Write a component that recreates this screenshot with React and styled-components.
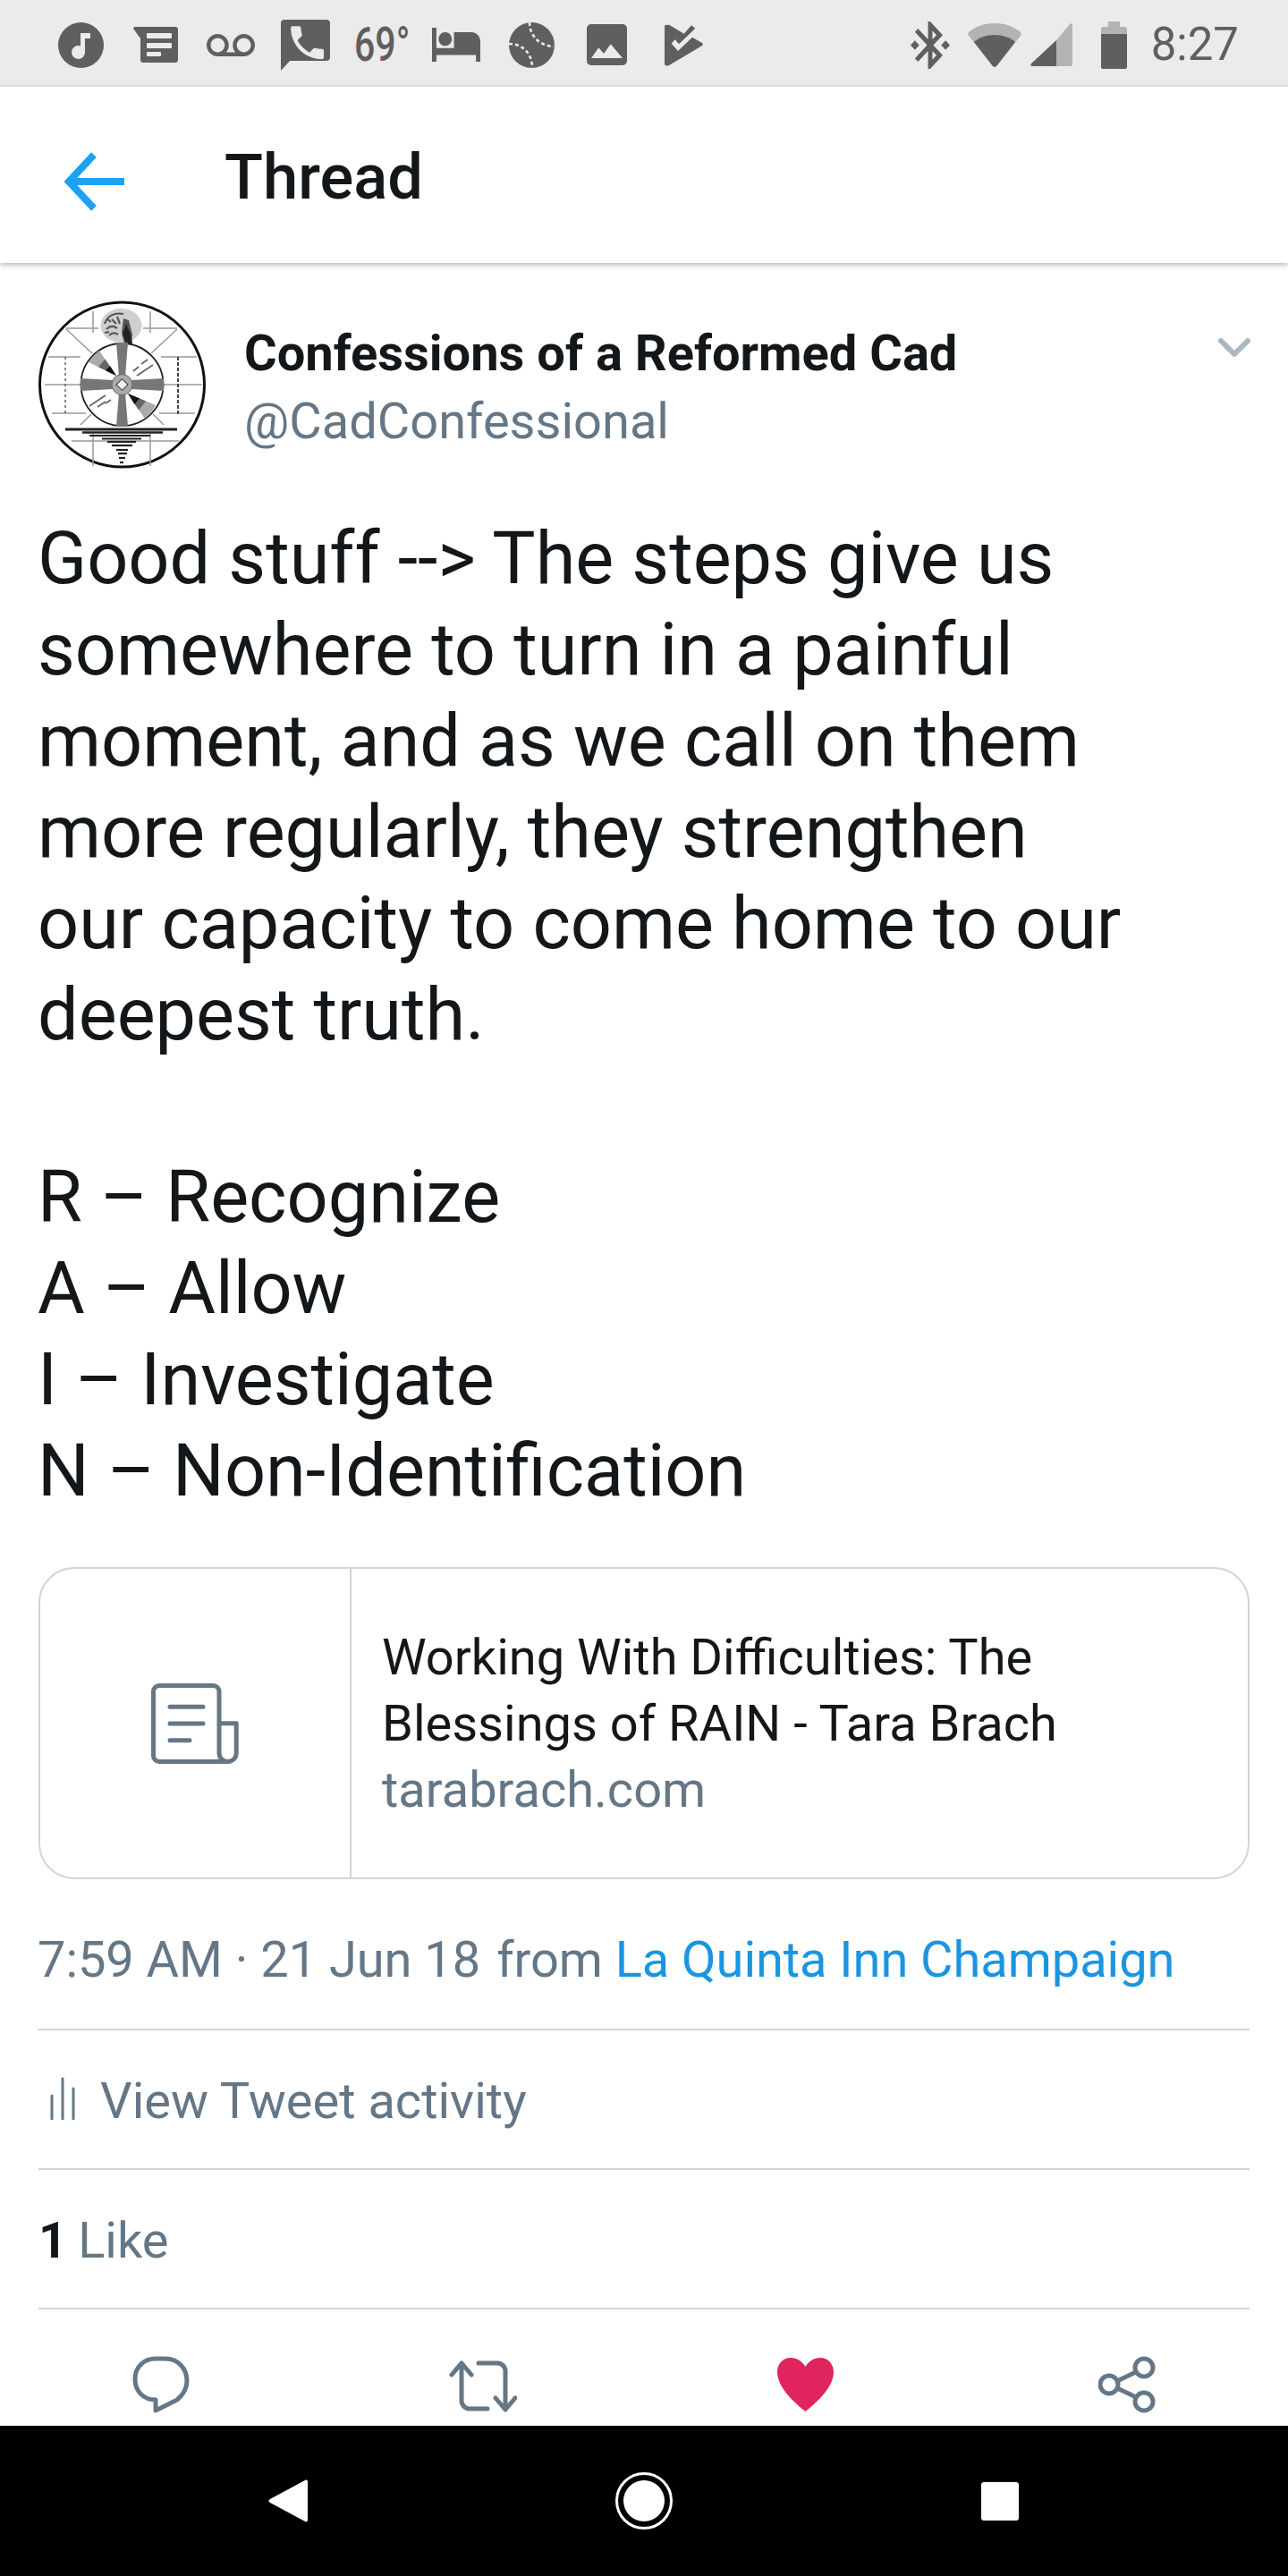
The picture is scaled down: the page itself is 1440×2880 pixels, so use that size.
import React from 'react'
import styled, { createGlobalStyle } from 'styled-components'

const GlobalStyle = createGlobalStyle`
  html, body {
    margin: 0;
    padding: 0;
    background: #fff;
  }
  body {
    font-family: Roboto, "Liberation Sans", sans-serif;
    color: #14171a;
  }
`

const Page = styled.div`
  width: 1440px;
  height: 2880px;
  display: flex;
  flex-direction: column;
  overflow: hidden;
  background: #fff;
`

const StatusBar = styled.div`
  height: 97px;
  box-sizing: border-box;
  flex: none;
  display: flex;
  align-items: center;
  justify-content: space-between;
  padding: 3px 55px 0 65px;
  background: #ebebeb;
  color: #5f5f5f;
`

const StatusGroup = styled.div`
  display: flex;
  align-items: center;
`

const StatusIcon = styled.svg`
  display: block;
  flex: none;
  margin-left: ${(p) => p.$gap || 0}px;
`

const Temp = styled.span`
  flex: none;
  width: 58px;
  margin-left: 27px;
  padding-right: 1px;
  font-size: 54px;
  line-height: 60px;
  font-weight: 500;
  white-space: nowrap;
  transform: scaleX(0.76);
  transform-origin: left center;
`

const Clock = styled.span`
  margin-left: 27px;
  font-size: 51px;
  line-height: 60px;
`

const Header = styled.header`
  height: 197px;
  flex: none;
  position: relative;
  display: flex;
  align-items: center;
  padding-left: 71px;
  background: #fff;
  box-shadow: 0 2px 6px rgba(0, 0, 0, 0.3);
`

const BackArrowIcon = styled.svg`
  display: block;
  margin-top: 15px;
`

const HeaderTitle = styled.h1`
  margin: 5px 0 0 112px;
  font-size: 70.500px;
  line-height: 80px;
  font-weight: 500;
  color: #14171a;
`

const Content = styled.main`
  flex: none;
  padding: 42px 43px 0;
`

const TweetHead = styled.div`
  display: flex;
  align-items: flex-start;
`

const Avatar = styled.svg`
  display: block;
  flex: none;
  width: 188px;
  height: 188px;
`

const Names = styled.div`
  margin-left: 42px;
  padding-top: 21px;
  flex: 1;
`

const Name = styled.div`
  font-size: 56px;
  line-height: 76px;
  font-weight: 700;
`

const Handle = styled.div`
  font-size: 56px;
  line-height: 76px;
  color: #657786;
`

const Chevron = styled.svg`
  display: block;
  flex: none;
  margin: 42px -1px 0 0;
`

const TweetText = styled.p`
  margin: 50px 0 56px -1px;
  font-size: 81px;
  line-height: 102px;
  white-space: pre-line;
`

const LinkCard = styled.div`
  height: 349px;
  box-sizing: border-box;
  display: flex;
  border: 2px solid #ccd6dd;
  border-radius: 40px;
`

const CardThumb = styled.div`
  width: 346px;
  flex: none;
  display: flex;
  align-items: center;
  justify-content: center;
  border-right: 2px solid #ccd6dd;
`

const CardBody = styled.div`
  display: flex;
  flex-direction: column;
  justify-content: center;
  padding-left: 34px;
  font-size: 56px;
  line-height: 74px;
`

const CardDomain = styled.div`
  color: #657786;
`

const Row = styled.div`
  height: 156px;
  box-sizing: border-box;
  display: flex;
  align-items: center;
  padding-top: 4px;
  font-size: 56px;
  color: #657786;
  border-bottom: 2px solid #ccd6dd;
`

const TimeRow = styled(Row)`
  height: 169px;
  padding-top: 12px;
  margin-left: -1px;
  letter-spacing: -0.05px;
`

const From = styled.span`
  margin-left: 18px;
  white-space: pre;
`

const Place = styled.span`
  color: #1b95e0;
`

const ActivityIcon = styled.svg`
  display: block;
  margin: -6px 27px 0 12px;
`

const LikeCount = styled.b`
  color: #14171a;
  font-weight: 700;
  margin-right: 12px;
`

const Actions = styled.div`
  flex: 1;
  display: grid;
  grid-template-columns: repeat(4, 1fr);
  justify-items: center;
  align-items: start;
  padding-top: 52px;
  background: #fff;
`

const ActionIcon = styled.svg`
  display: block;
  margin-top: ${(p) => p.$top || 0}px;
`

const NavBar = styled.nav`
  height: 168px;
  flex: none;
  display: grid;
  grid-template-columns: repeat(3, 398px);
  justify-content: center;
  justify-items: center;
  align-items: center;
  background: #000;
`

const NavIcon = styled.svg`
  display: block;
`

const DocSvg = styled.svg`
  display: block;
`

const MusicIcon = () => (
  <StatusIcon width="51" height="51" viewBox="0 0 51 51">
    <circle cx="25.500" cy="25.500" r="25.500" fill="currentColor" />
    <path d="M25 12h11v6h-6v15a7.500 7.500 0 1 1-5-6.600z" fill="#ebebeb" />
  </StatusIcon>
)

const MessageIcon = () => (
  <StatusIcon $gap={33} width="50" height="40" viewBox="0 0 50 40">
    <path
      fillRule="evenodd"
      fill="currentColor"
      d="M1 0h46a3 3 0 0 1 3 3v34a3 3 0 0 1-3 3H11a3 3 0 0 1-3-3V13L0 2zM16 7a1 1 0 0 0-1 1v4a1 1 0 0 0 1 1h26a1 1 0 0 0 1-1V8a1 1 0 0 0-1-1zM16 18a1 1 0 0 0-1 1v4a1 1 0 0 0 1 1h26a1 1 0 0 0 1-1v-4a1 1 0 0 0-1-1zM16 28a1 1 0 0 0-1 1v3a1 1 0 0 0 1 1h14a1 1 0 0 0 1-1v-3a1 1 0 0 0-1-1z"
    />
  </StatusIcon>
)

const VoicemailIcon = () => (
  <StatusIcon $gap={32} width="54" height="25" viewBox="0 6 24 11" preserveAspectRatio="none">
    <path
      fill="currentColor"
      d="M18.500 6C15.460 6 13 8.460 13 11.500c0 1.330.47 2.550 1.260 3.500H9.740c.79-.95 1.260-2.170 1.260-3.500C11 8.460 8.540 6 5.500 6S0 8.460 0 11.500 2.460 17 5.500 17h13c3.040 0 5.500-2.460 5.500-5.500S21.540 6 18.500 6zm-13 9C3.570 15 2 13.430 2 11.500S3.570 8 5.500 8 9 9.570 9 11.500 7.430 15 5.500 15zm13 0c-1.930 0-3.500-1.570-3.500-3.500S16.570 8 18.500 8 22 9.570 22 11.500 20.430 15 18.500 15z"
    />
  </StatusIcon>
)

const PhoneBubbleIcon = () => (
  <StatusIcon $gap={29} width="55" height="57" viewBox="0 0 55 57">
    <path
      fill="currentColor"
      d="M4 0h47a4 4 0 0 1 4 4v38a4 4 0 0 1-4 4H10L0 57V4a4 4 0 0 1 4-4z"
    />
    <path
      fill="#ebebeb"
      transform="translate(5 1) scale(2.050)"
      d="M6.620 10.790c1.440 2.830 3.760 5.140 6.590 6.590l2.200-2.200c.27-.27.67-.36 1.020-.24 1.120.37 2.330.57 3.570.57.55 0 1 .45 1 1V20c0 .55-.45 1-1 1-9.390 0-17-7.610-17-17 0-.55.45-1 1-1h3.500c.55 0 1 .45 1 1 0 1.250.2 2.450.57 3.570.11.35.03.74-.25 1.020l-2.200 2.200z"
    />
  </StatusIcon>
)

const BedIcon = () => (
  <StatusIcon $gap={28} width="54" height="38" viewBox="1 5 22 15" preserveAspectRatio="none">
    <path
      fill="currentColor"
      d="M7 13c1.660 0 3-1.340 3-3S8.660 7 7 7s-3 1.340-3 3 1.340 3 3 3zm12-6h-8v7H3V5H1v15h2v-3h18v3h2v-9c0-2.210-1.790-4-4-4z"
    />
  </StatusIcon>
)

const BallIcon = () => (
  <StatusIcon $gap={32} width="51" height="51" viewBox="0 0 51 51">
    <circle cx="25.500" cy="25.500" r="25.500" fill="currentColor" />
    <path
      d="M23 0c0 14 10 26 27 27M0 24c15 0 26 10 26 27"
      fill="none"
      stroke="#ebebeb"
      strokeWidth="2.600"
      strokeDasharray="4 3"
    />
  </StatusIcon>
)

const ImageIcon = () => (
  <StatusIcon $gap={36} width="45" height="46" viewBox="0 0 45 46">
    <rect width="45" height="46" rx="5" fill="currentColor" />
    <path d="M5 38 13.300 26.300 19 33 26.700 22.300 40 38z" fill="#ebebeb" />
  </StatusIcon>
)

const CheckIcon = () => (
  <StatusIcon $gap={42} width="43" height="47" viewBox="0 0 43 47">
    <path
      fill="currentColor"
      d="M1 1 5 .7 21.700 10.700 30 1.300 34.300 4.700 16 22.300 11.700 17 7.700 21.700 15 30 31 14.700 42 21c1 1 1 2 0 3L5 46c-2 1-5 1-5-2V3c0-1 0-2 1-2z"
    />
  </StatusIcon>
)

const BluetoothIcon = () => (
  <StatusIcon width="44" height="53" viewBox="3 2 18 20" preserveAspectRatio="none">
    <path
      fill="currentColor"
      d="M7 12l-2-2-2 2 2 2 2-2zm10.710-4.290L12 2h-1v7.590L6.410 5 5 6.410 10.590 12 5 17.590 6.410 19 11 14.410V22h1l5.710-5.710-4.300-4.290 4.300-4.290zM13 5.830l1.880 1.880L13 9.590V5.830zm1.880 10.460L13 18.170v-3.760l1.880 1.880zM19 10l-2 2 2 2 2-2-2-2z"
    />
  </StatusIcon>
)

const WifiIcon = () => (
  <StatusIcon $gap={20} width="60" height="49" viewBox="0 0 60 49">
    <path
      fill="#b3b3b3"
      d="M1 10C8 4 18 0 30 0s22 4 29 10c1 1 1 3 0 4L32 48c-1 1-3 1-4 0L1 14c-1-1-1-3 0-4z"
    />
    <path fill="currentColor" d="M7 21c5-5 14-8 23-8s18 3 23 8L32 48c-1 1-3 1-4 0z" />
  </StatusIcon>
)

const CellIcon = () => (
  <StatusIcon $gap={10} width="47" height="48" viewBox="0 0 47 48">
    <path fill="#b3b3b3" d="M44 1c1-1 3-1 3 1v44c0 1-1 2-2 2H29V19z" />
    <path fill="currentColor" d="M29 19v29H2c-2 0-2-2-1-3z" />
  </StatusIcon>
)

const BatteryIcon = () => (
  <StatusIcon $gap={32} width="29" height="53" viewBox="0 0 29 53">
    <path fill="#b3b3b3" d="M8 0h13v6h6c1 0 2 1 2 2v7H0V8c0-1 1-2 2-2h6z" />
    <path fill="currentColor" d="M0 14h29v37c0 1-1 2-2 2H2c-1 0-2-1-2-2z" />
  </StatusIcon>
)

const BackArrow = () => (
  <BackArrowIcon width="68" height="66" viewBox="0 0 68 66">
    <path d="M34 3 6 33l28 30M6 33h62" fill="none" stroke="#1da1f2" strokeWidth="8" />
  </BackArrowIcon>
)

const baseLines = [
  [53, 178, 160, 2.800],
  [72, 162, 163.500, 2.400],
  [80, 148, 167, 2.200],
  [94, 138, 170.500, 2.200],
  [100, 132, 174, 2.200],
  [105, 128, 178, 2.200],
  [110, 123, 183, 2.200],
  [112, 122, 187, 2.200],
  [113, 120, 192, 2.200],
  [114, 118, 197, 2.200],
]

const TestCard = () => (
  <Avatar viewBox="23 16 188 188">
    <circle cx="116.500" cy="110" r="92" fill="#fff" stroke="#111" strokeWidth="3" />
    <g stroke="#999" strokeWidth="1.500" fill="none">
      <path d="M84 28v24M148 28v24M84 165v36M148 165v36" />
      <path d="M54 48l29 27M178 48l-29 27M70 155l12-12M163 155l-12-12" />
      <path d="M34 79h36M160 79h40M30 110h42M160 110h46M38 142h38M158 142h40" />
      <path d="M60 173h120" />
      <path d="M140 47h38M54 47h36" />
      <path d="M53 79v64" strokeDasharray="3 3" stroke="#666" />
      <path d="M179 79v64" strokeDasharray="4 2" stroke="#444" strokeWidth="2" />
    </g>
    <ellipse cx="115.500" cy="44" rx="23" ry="19" fill="#cfcfcf" />
    <path
      d="M97 42c3-9 11-13 21-11M99 48c4-4 8-4 12-1M102 55c3-3 7-3 10-1M105 37l5 5M111 34l3 8M99 36l5 4M97 52l5-1"
      fill="none"
      stroke="#555"
      strokeWidth="2.200"
    />
    <path d="M118 36l6 2 4 16-2 10h-7l-3-12z" fill="#555" />
    <path d="M121 42l6 14 1 8-7 0-4-10z" fill="#222" />
    <circle cx="116.500" cy="110" r="46" fill="#fff" stroke="#222" strokeWidth="1.800" />
    <path d="M110 100 79.300 85A46 46 0 0 1 90.700 71.700z" fill="#aaa" />
    <path d="M110 100 90 90.300 97.500 81.600z" fill="#666" />
    <path d="M110 100 98 94.300 103 89z" fill="#111" />
    <path d="M123 120 154 133A46 46 0 0 1 141.700 148z" fill="#aaa" />
    <path d="M123 120 143 128.500 135 138.500z" fill="#666" />
    <path d="M123 120 136 125.500 130.500 132z" fill="#111" />
    <g fill="#777">
      <path d="M110 63h13l-3 38h-7z" />
      <path d="M110 157h13l-3-38h-7z" />
      <path d="M70 103v14l36-2v-10z" />
      <path d="M163 103v14l-36-2v-10z" />
    </g>
    <circle cx="116.500" cy="110" r="11.500" fill="#aaa" stroke="#666" />
    <rect x="112" y="105.500" width="9" height="9" fill="#eee" stroke="#333" transform="rotate(45 116.500 110)" />
    <g stroke="#666" strokeWidth="1.800">
      <path d="M133 100l18-12M145 82l-7 5M129 95l6-5" />
      <path d="M98 122l-18 12M89 135l9-6M104 127l-6 4" />
    </g>
    <g stroke="#222">
      {baseLines.map(([x1, x2, y, w]) => (
        <line key={y} x1={x1} x2={x2} y1={y} y2={y} strokeWidth={w} />
      ))}
    </g>
  </Avatar>
)

const DocIcon = () => (
  <DocSvg width="98" height="90" viewBox="0 0 98 90">
    <g fill="none" stroke="#657786" strokeWidth="5" strokeLinecap="round" strokeLinejoin="round">
      <path d="M85.700 87.500H9A6.500 6.500 0 0 1 2.500 81V9A6.500 6.500 0 0 1 9 2.500h60.500A6.500 6.500 0 0 1 76 9v69a9.500 9.500 0 0 0 19.200 0V44.700H76" />
      <path d="M21 26.300h37M21 45h37M21 63.700h22" />
    </g>
  </DocSvg>
)

const ActivityBars = () => (
  <ActivityIcon width="30" height="48" viewBox="0 0 30 48">
    <g stroke="#657786" strokeWidth="3" strokeLinecap="round">
      <path d="M3 21v26M15 2v45M27 13v34" />
    </g>
  </ActivityIcon>
)

const ReplyIcon = () => (
  <ActionIcon width="64" height="64" viewBox="0 0 64 64">
    <path
      d="M26 3h11c14 0 24 11 24 25 0 9-4 15-11 21L26 61V49C12 49 3 39 3 26 3 12 13 3 26 3z"
      fill="none"
      stroke="#657786"
      strokeWidth="5"
      strokeLinejoin="round"
    />
  </ActionIcon>
)

const RetweetIcon = () => (
  <ActionIcon $top={5} width="76" height="58" viewBox="0 0 76 58">
    <path
      d="M3 16 14 3l11 13M14 3v42a9 9 0 0 0 9 9h20M33 3h21a9 9 0 0 1 9 9v43M52 42l11 13 11-13"
      fill="none"
      stroke="#657786"
      strokeWidth="5"
      strokeLinecap="round"
      strokeLinejoin="round"
    />
  </ActionIcon>
)

const HeartIcon = () => (
  <ActionIcon $top={2} width="65" height="60" viewBox="0 0 65 60">
    <path
      d="M32.500 60C20 50 1 33 1 16 1 7 7 0 16 0c7 0 13 4 16.500 10C36 4 42 0 49 0c9 0 15 7 15 16 0 17-19 34-31.500 44z"
      fill="#e0245e"
    />
  </ActionIcon>
)

const ShareIcon = () => (
  <ActionIcon width="64" height="64" viewBox="0 0 64 64">
    <g fill="none" stroke="#657786" strokeWidth="5">
      <circle cx="51" cy="13" r="10" />
      <circle cx="12" cy="32" r="10" />
      <circle cx="51" cy="51" r="10" />
      <path d="M42 18 21 28M42 46 21 36" />
    </g>
  </ActionIcon>
)

const NavBack = () => (
  <NavIcon width="44" height="50" viewBox="0 0 44 50">
    <path d="M41 2c2-1 3 0 3 2v42c0 2-1 3-3 2L2 27c-2-1-2-3 0-4z" fill="#fff" />
  </NavIcon>
)

const NavHome = () => (
  <NavIcon width="64" height="64" viewBox="0 0 64 64">
    <circle cx="32" cy="32" r="30.500" fill="none" stroke="#fff" strokeWidth="3" />
    <circle cx="32" cy="32" r="23" fill="#fff" />
  </NavIcon>
)

const NavSquare = () => (
  <NavIcon width="42" height="43" viewBox="0 0 42 43">
    <rect width="42" height="43" rx="3" fill="#fff" />
  </NavIcon>
)

const tweet = `Good stuff --> The steps give us
somewhere to turn in a painful
moment, and as we call on them
more regularly, they strengthen
our capacity to come home to our
deepest truth.

R – Recognize
A – Allow
I – Investigate
N – Non-Identification`

export default function App() {
  return (
    <Page>
      <GlobalStyle />
      <StatusBar>
        <StatusGroup>
          <MusicIcon />
          <MessageIcon />
          <VoicemailIcon />
          <PhoneBubbleIcon />
          <Temp>69°</Temp>
          <BedIcon />
          <BallIcon />
          <ImageIcon />
          <CheckIcon />
        </StatusGroup>
        <StatusGroup>
          <BluetoothIcon />
          <WifiIcon />
          <CellIcon />
          <BatteryIcon />
          <Clock>8:27</Clock>
        </StatusGroup>
      </StatusBar>
      <Header>
        <BackArrow />
        <HeaderTitle>Thread</HeaderTitle>
      </Header>
      <Content>
        <TweetHead>
          <TestCard />
          <Names>
            <Name>Confessions of a Reformed Cad</Name>
            <Handle>@CadConfessional</Handle>
          </Names>
          <Chevron width="36" height="22" viewBox="0 0 36 22">
            <path d="M3 3l15 15L33 3" fill="none" stroke="#aab8c2" strokeWidth="6" strokeLinecap="round" strokeLinejoin="round" />
          </Chevron>
        </TweetHead>
        <TweetText>{tweet}</TweetText>
        <LinkCard>
          <CardThumb>
            <DocIcon />
          </CardThumb>
          <CardBody>
            <div>Working With Difficulties: The</div>
            <div>Blessings of RAIN - Tara Brach</div>
            <CardDomain>tarabrach.com</CardDomain>
          </CardBody>
        </LinkCard>
        <TimeRow>
          7:59 AM · 21 Jun 18
          <From>from </From>
          <Place>La Quinta Inn Champaign</Place>
        </TimeRow>
        <Row>
          <ActivityBars />
          View Tweet activity
        </Row>
        <Row>
          <LikeCount>1</LikeCount>
          Like
        </Row>
      </Content>
      <Actions>
        <ReplyIcon />
        <RetweetIcon />
        <HeartIcon />
        <ShareIcon />
      </Actions>
      <NavBar>
        <NavBack />
        <NavHome />
        <NavSquare />
      </NavBar>
    </Page>
  )
}
